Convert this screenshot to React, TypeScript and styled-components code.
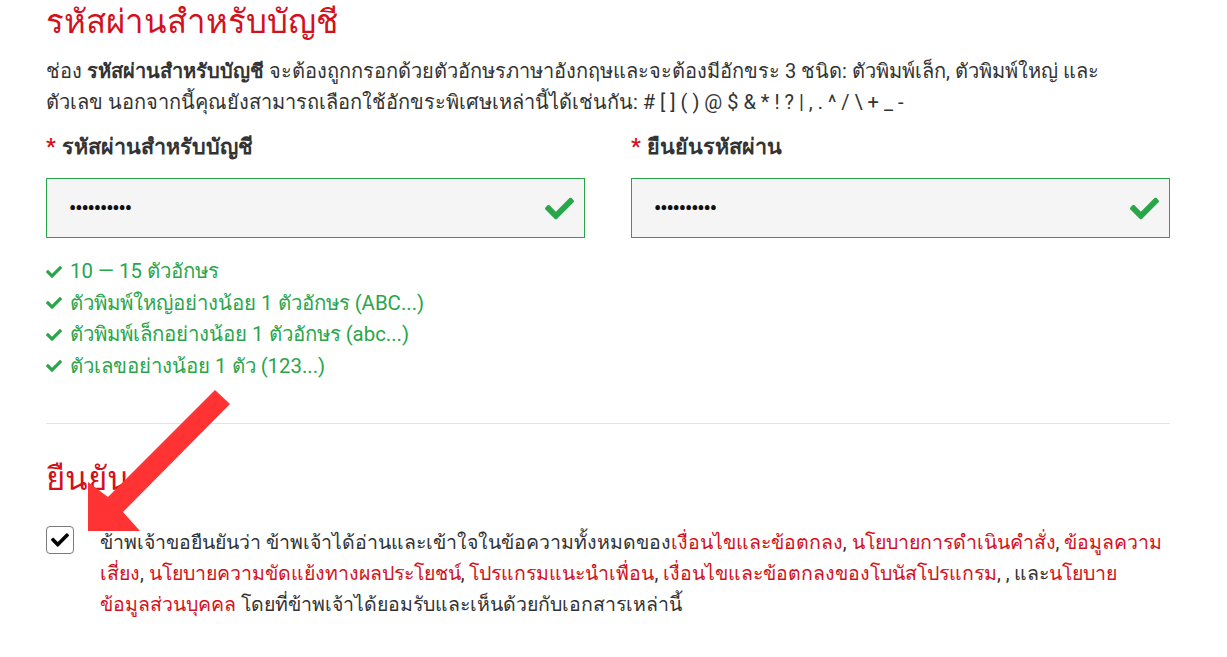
import styled, { createGlobalStyle } from "styled-components";
import { FaCheck } from "react-icons/fa";

const GlobalStyle = createGlobalStyle`
  body {
    margin: 0;
    background: #ffffff;
    font-family: Roboto, "Noto Sans", "DejaVu Sans", sans-serif;
    color: #333333;
  }
`;

const Page = styled.div`
  position: relative;
  width: 1124px;
  padding: 0 0 40px 46px;
`;

const Heading = styled.h2`
  margin: 0;
  font-size: 33px;
  font-weight: 400;
  line-height: 44px;
  color: #d3111c;
`;

const Intro = styled.p`
  margin: 12px 0 0;
  font-size: 20px;
  line-height: 31px;
  white-space: nowrap;
`;

const Fields = styled.div`
  display: grid;
  grid-template-columns: 1fr 1fr;
  column-gap: 46px;
  margin-top: 14px;
`;

const Field = styled.div`
  display: flex;
  flex-direction: column;
`;

const Label = styled.label`
  font-size: 21.5px;
  font-weight: 700;
  line-height: 30px;
  color: #333333;
`;

const Star = styled.span`
  color: #d3111c;
  margin-right: 6px;
`;

const InputBox = styled.div`
  display: flex;
  align-items: center;
  justify-content: space-between;
  margin-top: 16px;
  height: 58px;
  padding: 0 10px 0 22px;
  background: #f5f5f5;
  border: 1px solid #2aa64a;
`;

const Dots = styled.span`
  font-size: 20px;
  font-weight: 700;
  letter-spacing: -1px;
  color: #111111;
`;

const InputCheck = styled(FaCheck)`
  color: #2aa64a;
  width: 29px;
  height: 29px;
`;

const Rules = styled.ul`
  list-style: none;
  margin: 18px 0 0;
  padding: 0;
`;

const Rule = styled.li`
  display: flex;
  align-items: center;
  gap: 8px;
  font-size: 20.4px;
  line-height: 31.5px;
  color: #2aa64a;
`;

const RuleCheck = styled(FaCheck)`
  width: 16px;
  height: 16px;
`;

const Divider = styled.hr`
  margin: 41px 0 0;
  border: 0;
  border-top: 1px solid #e3e3e3;
`;

const ConfirmHeading = styled(Heading)`
  margin-top: 33px;
`;

const ConsentRow = styled.div`
  display: flex;
  align-items: flex-start;
  gap: 26px;
  margin-top: 26px;
`;

const Box = styled.span`
  flex: none;
  display: flex;
  align-items: center;
  justify-content: center;
  width: 26px;
  height: 26px;
  margin-top: -1px;
  border: 1px solid #7a7a7a;
  border-radius: 4px;
  background: #ffffff;
`;

const BoxCheck = styled(FaCheck)`
  width: 18px;
  height: 18px;
  color: #000000;
`;

const ConsentText = styled.p`
  margin: 0;
  font-size: 19.5px;
  line-height: 31px;
  white-space: nowrap;
`;

const Link = styled.a`
  color: #d3111c;
  text-decoration: none;
`;

const Arrow = styled.svg`
  position: absolute;
  left: 0;
  top: 0;
  pointer-events: none;
`;

const rules = [
  "10 — 15 ตัวอักษร",
  "ตัวพิมพ์ใหญ่อย่างน้อย 1 ตัวอักษร (ABC...)",
  "ตัวพิมพ์เล็กอย่างน้อย 1 ตัวอักษร (abc...)",
  "ตัวเลขอย่างน้อย 1 ตัว (123...)",
];

export default function App() {
  return (
    <>
      <GlobalStyle />
      <Page>
        <Heading>รหัสผ่านสำหรับบัญชี</Heading>
        <Intro>
          ช่อง <b>รหัสผ่านสำหรับบัญชี</b> จะต้องถูกกรอกด้วยตัวอักษรภาษาอังกฤษและจะต้องมีอักขระ 3 ชนิด: ตัวพิมพ์เล็ก, ตัวพิมพ์ใหญ่ และ
          <br />
          ตัวเลข นอกจากนี้คุณยังสามารถเลือกใช้อักขระพิเศษเหล่านี้ได้เช่นกัน: # [ ] ( ) @ $ & * ! ? | , . ^ / \ + _ -
        </Intro>
        <Fields>
          <Field>
            <Label>
              <Star>*</Star>รหัสผ่านสำหรับบัญชี
            </Label>
            <InputBox>
              <Dots>••••••••••</Dots>
              <InputCheck />
            </InputBox>
            <Rules>
              {rules.map((r) => (
                <Rule key={r}>
                  <RuleCheck />
                  {r}
                </Rule>
              ))}
            </Rules>
          </Field>
          <Field>
            <Label>
              <Star>*</Star>ยืนยันรหัสผ่าน
            </Label>
            <InputBox>
              <Dots>••••••••••</Dots>
              <InputCheck />
            </InputBox>
          </Field>
        </Fields>
        <Divider />
        <ConfirmHeading>ยืนยัน</ConfirmHeading>
        <ConsentRow>
          <Box>
            <BoxCheck />
          </Box>
          <ConsentText>
            ข้าพเจ้าขอยืนยันว่า ข้าพเจ้าได้อ่านและเข้าใจในข้อความทั้งหมดของ
            <Link>เงื่อนไขและข้อตกลง</Link>, <Link>นโยบายการดำเนินคำสั่ง</Link>, <Link>ข้อมูลความ</Link>
            <br />
            <Link>เสี่ยง</Link>, <Link>นโยบายความขัดแย้งทางผลประโยชน์</Link>, <Link>โปรแกรมแนะนำเพื่อน</Link>,{" "}
            <Link>เงื่อนไขและข้อตกลงของโบนัสโปรแกรม</Link>, , และ<Link>นโยบาย</Link>
            <br />
            <Link>ข้อมูลส่วนบุคคล</Link> โดยที่ข้าพเจ้าได้ยอมรับและเห็นด้วยกับเอกสารเหล่านี้
          </ConsentText>
        </ConsentRow>
        <Arrow width="240" height="560" viewBox="0 0 240 560">
          <polygon
            points="215,390 230,404 123,512 140,531 88,531 88,482 108,497"
            fill="#ff3333"
          />
        </Arrow>
      </Page>
    </>
  );
}
